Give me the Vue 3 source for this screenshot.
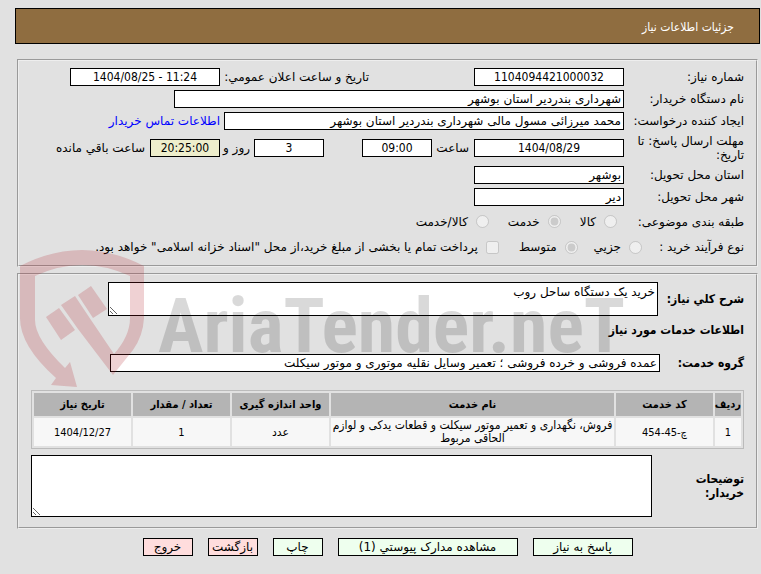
<script setup>
import { ref } from "vue";

const category = ref("service");
const process = ref("medium");
const treasury = ref(false);
const summary = ref("خرید یک دستگاه ساحل روب");
const notes = ref("");

const categories = [
  { value: "goods", text: "کالا" },
  { value: "service", text: "خدمت" },
  { value: "both", text: "کالا/خدمت" },
];

const processes = [
  { value: "minor", text: "جزیي" },
  { value: "medium", text: "متوسط" },
];

const services = [
  {
    row: "1",
    code: "چ-45-454",
    name: "فروش، نگهداری و تعمیر موتور سیکلت و قطعات یدکی و لوازم الحاقی مربوط",
    unit: "عدد",
    count: "1",
    date: "1404/12/27",
  },
];
</script>

<template>
  <main class="page" dir="rtl">
    <h1 class="title">جزئیات اطلاعات نیاز</h1>

    <section class="panel">
      <div class="row">
        <label class="name" for="number">شماره نیاز:</label>
        <input id="number" class="w150 num" value="1104094421000032" readonly />
        <label class="announce" for="announce">تاریخ و ساعت اعلان عمومي:</label>
        <input id="announce" class="w150 num" value="1404/08/25 - 11:24" dir="ltr" readonly />
      </div>
      <div class="row">
        <label class="name" for="buyer">نام دستگاه خریدار:</label>
        <input id="buyer" class="w450" value="شهرداری بندردیر استان بوشهر" readonly />
      </div>
      <div class="row">
        <label class="name" for="creator">ایجاد کننده درخواست:</label>
        <input id="creator" class="w400" value="محمد میرزائی مسول مالی شهرداری بندردیر استان بوشهر" readonly />
        <a class="contact" href="#contact">اطلاعات تماس خریدار</a>
      </div>
      <div class="row deadline">
        <label class="name" for="date">مهلت ارسال پاسخ: تا تاریخ:</label>
        <input id="date" class="w150 num" value="1404/08/29" readonly />
        <label class="hour" for="hour">ساعت</label>
        <input id="hour" class="w70 num" value="09:00" readonly />
        <input id="days" class="w70 num days" value="3" readonly />
        <label class="day" for="days">روز و</label>
        <input id="left" class="w70 num timer" value="20:25:00" readonly />
        <label class="left" for="left">ساعت باقي مانده</label>
      </div>
      <div class="row">
        <label class="name" for="province">استان محل تحویل:</label>
        <input id="province" class="w150" value="بوشهر" readonly />
      </div>
      <div class="row">
        <label class="name" for="city">شهر محل تحویل:</label>
        <input id="city" class="w150" value="دیر" readonly />
      </div>
      <div class="row options">
        <span class="name">طبقه بندی موضوعی:</span>
        <label v-for="c in categories" :key="c.value" class="option">
          <input type="radio" name="category" :value="c.value" v-model="category" disabled />
          {{ c.text }}
        </label>
      </div>
      <div class="row options process">
        <span class="name">نوع فرآیند خرید :</span>
        <label v-for="p in processes" :key="p.value" class="option">
          <input type="radio" name="process" :value="p.value" v-model="process" disabled />
          {{ p.text }}
        </label>
        <label class="option treasury">
          <input type="checkbox" v-model="treasury" disabled />
          پرداخت تمام یا بخشی از مبلغ خرید،از محل "اسناد خزانه اسلامی" خواهد بود.
        </label>
      </div>
    </section>

    <section class="panel">
      <div class="summary">
        <label class="bold" for="summary">شرح کلي نیاز:</label>
        <textarea id="summary" v-model="summary" readonly></textarea>
      </div>
      <h2 class="bold">اطلاعات خدمات مورد نیاز</h2>
      <div class="group">
        <label class="bold" for="group">گروه خدمت:</label>
        <input id="group" value="عمده فروشی و خرده فروشی ؛ تعمیر وسایل نقلیه موتوری و موتور سیکلت" readonly />
      </div>

      <table>
        <thead>
          <tr>
            <th class="c-row">ردیف</th>
            <th class="c-mid">کد خدمت</th>
            <th>نام خدمت</th>
            <th class="c-mid">واحد اندازه گیری</th>
            <th class="c-mid">تعداد / مقدار</th>
            <th class="c-mid">تاریخ نیاز</th>
          </tr>
        </thead>
        <tbody>
          <tr v-for="s in services" :key="s.row">
            <td>{{ s.row }}</td>
            <td>{{ s.code }}</td>
            <td class="words">{{ s.name }}</td>
            <td class="words">{{ s.unit }}</td>
            <td>{{ s.count }}</td>
            <td>{{ s.date }}</td>
          </tr>
        </tbody>
      </table>

      <div class="notes">
        <label class="bold" for="notes">توضیحات خریدار:</label>
        <textarea id="notes" v-model="notes" readonly></textarea>
      </div>
    </section>

    <div class="actions">
      <button type="button" class="wide">پاسخ به نیاز</button>
      <button type="button" class="docs">مشاهده مدارک پیوستي (1)</button>
      <button type="button">چاپ</button>
      <button type="button" class="red">بازگشت</button>
      <button type="button" class="red">خروج</button>
    </div>

    <svg class="watermark" viewBox="0 0 640 150" width="640" height="150" direction="ltr" aria-hidden="true">
      <g fill="#b01923" fill-opacity="0.2">
        <path d="M20 25 Q82 -7 144 25 V77 Q143 95 133 109 L113 134 L78 88 L61 64 L75 55 L91 79 L114 113 Q130 95 130 77 V35 Q82 13 35 35 V79 Q35 98 65 127 L70 121 L77 146 L51 144 L56 137 Q20 105 20 77 Z" />
        <path d="M46 76 L59 67 L75 89 L61 99 Z" />
        <path d="M78 54 L91 45 L107 68 L93 77 Z" />
      </g>
      <text x="158" y="111">AriaTender.neT</text>
    </svg>
  </main>
</template>

<style>
body {
  margin: 0;
  background: #e1e1e1;
}
</style>

<style scoped>
.page {
  position: relative;
  padding: 8px 1px 18px 15px;
  font-family: "DejaVu Sans", sans-serif;
  font-size: 12px;
  line-height: 14px;
  color: #000;
}

.title {
  margin: 0 0 15px;
  padding: 11px 25px 9px;
  border: 1px solid #000;
  background: #8f6d40;
  color: #fff;
  font-family: "DejaVu Sans Condensed", sans-serif;
  font-size: 12px;
  font-weight: normal;
  line-height: 14px;
}

.panel {
  margin: 0 2px 6px;
  padding: 5px 12px 6px;
  border: 2px groove #eee;
}

.row {
  display: flex;
  align-items: center;
  height: 22px;
}

.name {
  flex: none;
  width: 120px;
}

input,
textarea,
button {
  box-sizing: border-box;
  margin: 0;
  border: 1px solid #000;
  border-radius: 0;
  background: #fff;
  color: #000;
  font-family: inherit;
  font-size: 12px;
}

input {
  height: 18px;
  padding: 1px 2px;
}

.num {
  text-align: center;
  font-family: "DejaVu Sans Condensed", sans-serif;
}

.w70 {
  width: 70px;
}

.w150 {
  width: 150px;
}

.w400 {
  width: 400px;
}

.w450 {
  width: 450px;
}

.announce {
  width: 149px;
  margin-right: 105px;
  white-space: nowrap;
}

.contact {
  margin-right: 4px;
  color: #00f;
  text-decoration: none;
}

.deadline {
  height: 32px;
}

.hour {
  box-sizing: border-box;
  width: 42px;
  padding-right: 5px;
}

.days {
  margin-right: 38px;
}

.day {
  box-sizing: border-box;
  width: 34px;
  padding-right: 4px;
  white-space: nowrap;
}

.timer {
  background: #eeeecc;
}

.left {
  margin-right: 5px;
}

.options {
  height: 27px;
  gap: 19px;
}

.options .name {
  width: 108px;
  white-space: nowrap;
}

.process {
  height: 24px;
  gap: 16px;
}

.process .name {
  width: 86px;
}

.option {
  display: flex;
  align-items: center;
  gap: 8px;
  white-space: nowrap;
}

.treasury {
  margin-right: 4px;
}

.option input {
  width: 13px;
  height: 13px;
}

.bold {
  font-family: "DejaVu Sans Condensed", sans-serif;
  font-size: 12px;
  font-weight: bold;
}

textarea {
  display: block;
  padding: 2px;
  line-height: 14px;
  resize: both;
}

.summary,
.group,
.notes {
  display: flex;
  align-items: center;
}

.summary {
  padding-top: 2px;
}

.summary label {
  width: 86px;
}

.summary textarea {
  width: 550px;
  height: 34px;
}

h2 {
  margin: 7px 0 17px;
}

.group label {
  width: 84px;
}

.group input {
  width: 550px;
}

table {
  width: 100%;
  margin: 18px 0 6px;
  border: 1px solid #bbb;
  border-spacing: 2px;
  table-layout: fixed;
  font-family: "DejaVu Sans Condensed", sans-serif;
  font-size: 11px;
}

th {
  height: 23px;
  padding: 0;
  background: #b4b4b4;
}

td {
  height: 28px;
  padding: 0 1px;
  background: #f7f7f7;
  text-align: center;
  line-height: 13px;
}

.words {
  font-size: 12px;
}

.c-row {
  width: 26px;
}

.c-mid {
  width: 97px;
}

.notes label {
  box-sizing: border-box;
  width: 92px;
  padding-left: 24px;
}

.notes textarea {
  flex: 1;
  height: 62px;
}

.panel .notes {
  margin-bottom: 4px;
}

.actions {
  display: flex;
  justify-content: center;
  gap: 15px;
  margin-top: 9px;
}

button {
  width: 50px;
  height: 18px;
  padding: 0;
  background: #eeffee;
  white-space: nowrap;
}

.wide {
  width: 100px;
}

.docs {
  width: 180px;
}

.red {
  background: #ffdddd;
}

.watermark {
  position: absolute;
  left: 0;
  top: 241px;
  pointer-events: none;
}

.watermark text {
  font-family: "Liberation Sans Narrow", "Roboto Condensed", "DejaVu Sans Condensed", sans-serif;
  font-size: 76px;
  font-weight: bold;
  fill: #000;
  fill-opacity: 0.15;
}
</style>
